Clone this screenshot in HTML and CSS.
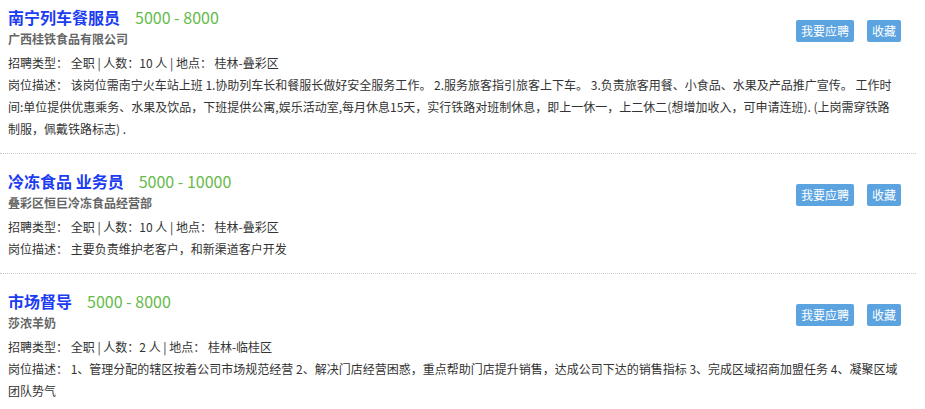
FILE: index.html
```html
<!DOCTYPE html>
<html lang="zh-CN">
<head>
    <meta charset="UTF-8">
    <meta name="viewport" content="width=device-width, initial-scale=1.0">
    <title>职位列表</title>
    <link rel="stylesheet" href="styles.css">
</head>
<body>

    <ul class="jobList">
        <li class="jobItem">
            <div class="jobActions">
                <button class="jobButton">我要应聘</button>
                <button class="jobButton">收藏</button>
            </div>
            <div class="jobTitle"><a href="#">南宁列车餐服员</a><span class="salary">5000 - 8000</span></div>
            <div class="company">广西桂铁食品有限公司</div>
            <div class="info">招聘类型： 全职 | 人数：10 人 | 地点： 桂林-叠彩区</div>
            <div class="desc">岗位描述： 该岗位需南宁火车站上班 1.协助列车长和餐服长做好安全服务工作。 2.服务旅客指引旅客上下车。 3.负责旅客用餐、小食品、水果及产品推广宣传。 工作时间:单位提供优惠乘务、水果及饮品，下班提供公寓,娱乐活动室,每月休息15天，实行铁路对班制休息，即上一休一，上二休二(想增加收入，可申请连班). (上岗需穿铁路制服，佩戴铁路标志) .</div>
        </li>

        <li class="jobItem">
            <div class="jobActions">
                <button class="jobButton">我要应聘</button>
                <button class="jobButton">收藏</button>
            </div>
            <div class="jobTitle"><a href="#">冷冻食品 业务员</a><span class="salary">5000 - 10000</span></div>
            <div class="company">叠彩区恒巨冷冻食品经营部</div>
            <div class="info">招聘类型： 全职 | 人数：10 人 | 地点： 桂林-叠彩区</div>
            <div class="desc">岗位描述： 主要负责维护老客户，和新渠道客户开发</div>
        </li>

        <li class="jobItem">
            <div class="jobActions">
                <button class="jobButton">我要应聘</button>
                <button class="jobButton">收藏</button>
            </div>
            <div class="jobTitle"><a href="#">市场督导</a><span class="salary">5000 - 8000</span></div>
            <div class="company">莎浓羊奶</div>
            <div class="info">招聘类型： 全职 | 人数：2 人 | 地点： 桂林-临桂区</div>
            <div class="desc">岗位描述： 1、管理分配的辖区按着公司市场规范经营 2、解决门店经营困惑，重点帮助门店提升销售，达成公司下达的销售指标 3、完成区域招商加盟任务 4、凝聚区域团队势气</div>
        </li>
    </ul>

</body>
</html>
```

FILE: styles.css
```css
body {
    margin: 0;
    background-color: #fff;
    font-family: "Noto Sans CJK SC", "Noto Sans", sans-serif;
    font-size: 12px;
    color: #333;
}

.jobList {
    list-style: none;
    margin: 0 9px 0 0;
    padding: 0;
}

.jobItem {
    padding: 16px 15px 13px 8px;
    border-bottom: 1px dotted #c8c8c8;
}

.jobItem:first-child {
    padding-top: 6px;
}

.jobActions {
    float: right;
    display: flex;
    gap: 13px;
    margin-top: 14px;
}

.jobButton {
    height: 22px;
    padding: 0 5px;
    border: none;
    border-radius: 2px;
    background-color: #5ba4e0;
    color: #fff;
    font-family: inherit;
    font-size: 12px;
    line-height: 22px;
    cursor: pointer;
}

.jobButton:hover {
    background-color: #4a93d0;
}

.jobTitle {
    line-height: 22px;
    font-size: 16px;
}

.jobTitle a {
    color: #1c3cf2;
    font-weight: bold;
    text-decoration: none;
}

.salary {
    margin-left: 15px;
    color: #66bb4a;
}

.company {
    line-height: 22px;
    color: #666;
    font-weight: bold;
}

.info {
    margin-top: 2px;
    line-height: 22px;
}

.desc {
    line-height: 22px;
}
```
